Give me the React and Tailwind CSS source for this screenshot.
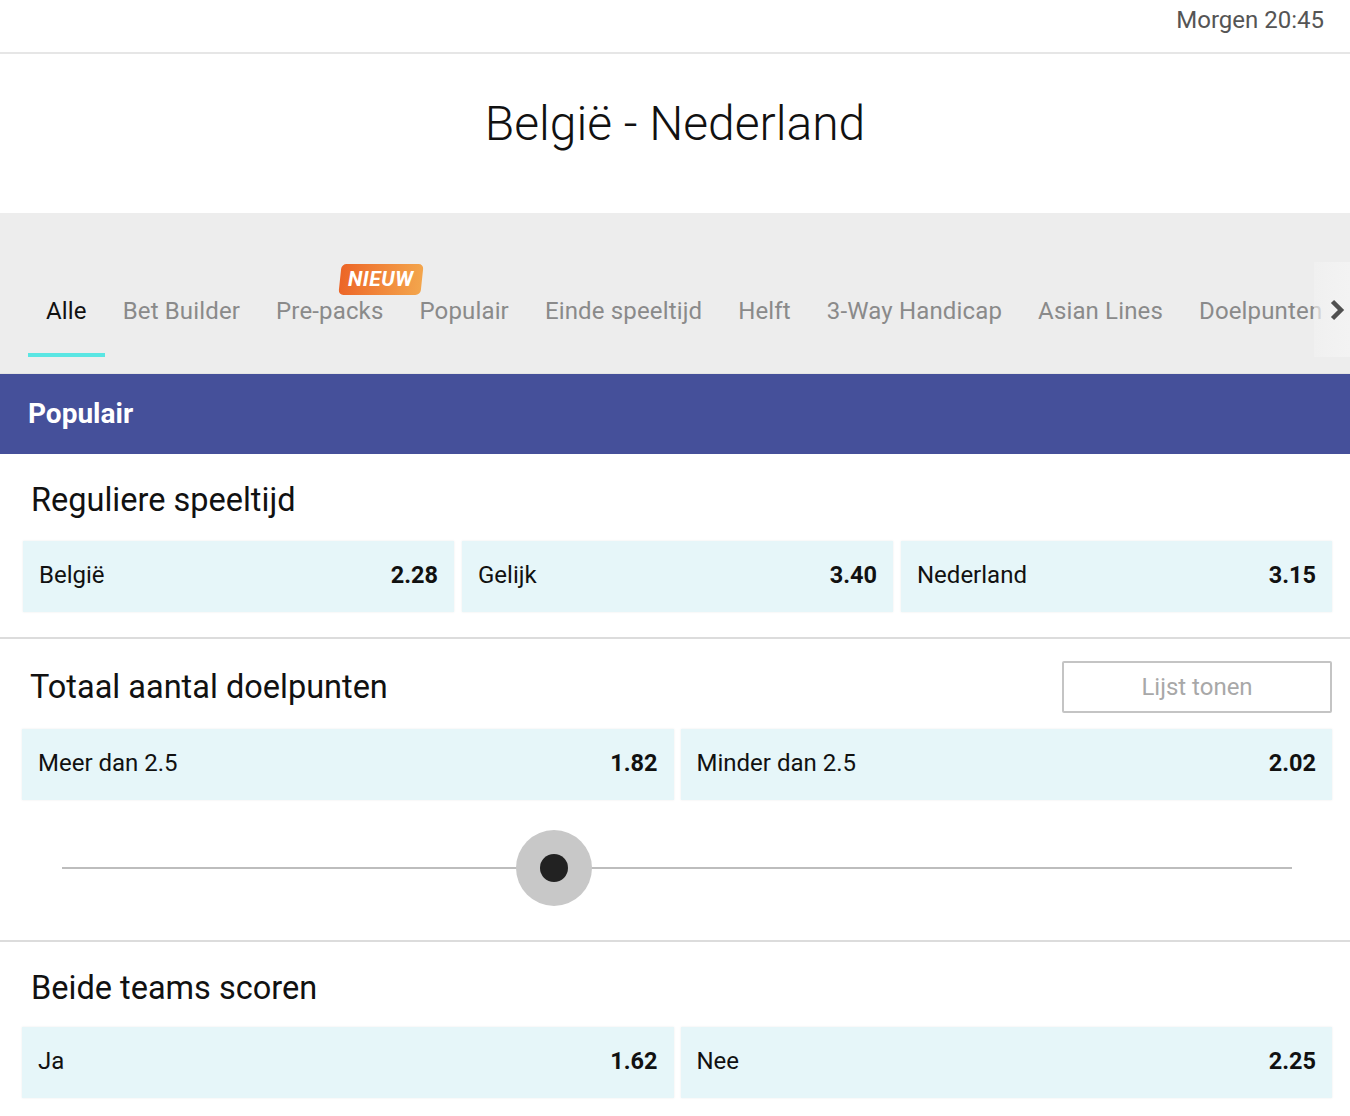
import React from "react";

const tabs = [
  "Alle",
  "Bet Builder",
  "Pre-packs",
  "Populair",
  "Einde speeltijd",
  "Helft",
  "3-Way Handicap",
  "Asian Lines",
  "Doelpunten",
];

function Odd({ label, value }) {
  return (
    <div className="flex-1 h-full flex items-center px-4 pb-[3px] bg-[#e6f6f9] shadow-[0_0_2px_rgba(0,0,0,0.08)] text-[#111]">
      <div className="flex-1 flex items-baseline justify-between">
        <span className="text-[24px] leading-[30px]">{label}</span>
        <span className="text-[23.5px] leading-[30px] font-bold">{value}</span>
      </div>
    </div>
  );
}

export default function App() {
  return (
    <div className="w-[1350px] h-[1116px] overflow-hidden bg-white text-[#111]" style={{ fontFamily: "Roboto, 'Liberation Sans', sans-serif" }}>
      {/* Top bar */}
      <div className="h-[54px] flex items-center justify-end pr-[26px] border-b-2 border-[#e6e6e6] pb-[12px]">
        <span className="text-[24px] text-[#555]">Morgen 20:45</span>
      </div>
      {/* Title */}
      <div className="h-[159px] flex items-center justify-center pb-[20px]">
        <h1 className="text-[48px] font-light text-[#111]">België - Nederland</h1>
      </div>
      {/* Tabs */}
      <div className="relative h-[161px] bg-[#ededed] flex items-end pl-[28px] border-b border-[#e4e4e4] overflow-hidden">
        {tabs.map((t, i) => (
          <div key={t} className="relative flex flex-col shrink-0 px-[18px] pb-[16px]">
            {t === "Pre-packs" && (
              <div className="absolute left-[82px] top-[-32px] w-[82px] h-[31px] rounded-[5px] -skew-x-6 bg-gradient-to-r from-[#ec6527] to-[#f3a54c] flex items-center justify-center">
                <span className="text-white italic font-bold text-[21px] tracking-[0.5px] skew-x-6">NIEUW</span>
              </div>
            )}
            <span className={"text-[24px] leading-[30px] whitespace-nowrap tracking-[0.15px] " + (i === 0 ? "text-[#111]" : "text-[#8a8a8a]")}>{t}</span>
            <div className={"mt-[27px] h-[4px] -mx-[18px] " + (i === 0 ? "bg-[#5ae6e3]" : "bg-transparent")} />
          </div>
        ))}
        <div className="absolute right-0 top-[49px] w-[36px] h-[95px] bg-gradient-to-r from-[#f2f2f2]/60 via-[#f2f2f2]/95 to-[#f3f3f3] flex items-center justify-end pr-[5px]">
          <svg width="16" height="24" viewBox="0 0 16 24">
            <path d="M3.5 3.5 L12 12 L3.5 20.5" stroke="#505050" strokeWidth="4.5" fill="none" strokeLinejoin="miter" />
          </svg>
        </div>
      </div>
      {/* Blue header */}
      <div className="h-[80px] bg-[#45509a] flex items-center pl-[28px]">
        <span className="text-white font-bold text-[28px]">Populair</span>
      </div>
      {/* Section 1 */}
      <div className="pl-[23px] pr-[18px] pt-[28px] pb-[25px] border-b-2 border-[#dcdcdc]">
        <div className="pl-[8px] text-[32.5px] leading-[36px] mb-[23px]">Reguliere speeltijd</div>
        <div className="flex gap-[8px] h-[71px]">
          <Odd label="België" value="2.28" />
          <Odd label="Gelijk" value="3.40" />
          <Odd label="Nederland" value="3.15" />
        </div>
      </div>
      {/* Section 2 */}
      <div className="pl-[22px] pr-[18px] pt-[22px] border-b-2 border-[#dcdcdc]">
        <div className="flex items-center justify-between h-[52px]">
          <span className="pl-[8px] text-[32.5px]">Totaal aantal doelpunten</span>
          <div className="w-[270px] h-[52px] border-2 border-[#c4c4c4] rounded-[2px] flex items-center justify-center text-[24px] text-[#a8a8a8]">
            Lijst tonen
          </div>
        </div>
        <div className="flex gap-[7px] h-[71px] mt-[16px]">
          <Odd label="Meer dan 2.5" value="1.82" />
          <Odd label="Minder dan 2.5" value="2.02" />
        </div>
        <div className="relative h-[140px] mx-[40px]">
          <div className="absolute left-0 right-0 top-[67px] h-[2px] bg-[#bdbdbd]" />
          <div className="absolute left-[454px] top-[30px] w-[76px] h-[76px] rounded-full bg-[#c8c8c8] flex items-center justify-center">
            <div className="w-[28px] h-[28px] rounded-full bg-[#222]" />
          </div>
        </div>
      </div>
      {/* Section 3 */}
      <div className="pl-[22px] pr-[18px] pt-[28px]">
        <div className="pl-[9px] text-[32.5px] leading-[36px] mb-[21px]">Beide teams scoren</div>
        <div className="flex gap-[7px] h-[71px]">
          <Odd label="Ja" value="1.62" />
          <Odd label="Nee" value="2.25" />
        </div>
      </div>
    </div>
  );
}
